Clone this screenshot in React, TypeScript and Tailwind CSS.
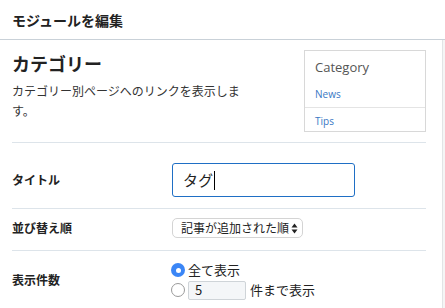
export default function App() {
  const jp = { fontFamily: '"Noto Sans CJK JP", "Noto Sans", sans-serif' };

  return (
    <div className="h-[308px] w-[445px] overflow-hidden bg-white text-[#222]" style={jp}>
      {/* header */}
      <div className="flex h-[40px] items-center border-b border-[#c9d1d8] px-3">
        <h2 className="text-[14px] font-bold leading-none text-[#222]">モジュールを編集</h2>
      </div>

      <div className="flex">
        <div className="w-[443px] border-r border-[#e2e4e6] pl-3 pr-4">
          {/* top section */}
          <div className="flex justify-between border-b border-[#dde4ea] py-[10px]">
            <div className="w-[240px]">
              <h1 className="pt-[1px] text-[18px] font-bold leading-[24px]">カテゴリー</h1>
              <p className="mt-[6px] text-[12px] leading-[20px] text-[#333]">
                カテゴリー別ページへのリンクを表示します。
              </p>
            </div>
            <div
              className="h-[82px] w-[122px] border border-[#d8d8d8] bg-white"
              style={{ fontFamily: '"Open Sans", "Noto Sans", sans-serif' }}
            >
              <p className="px-[10px] pt-[7px] text-[13px] leading-[18px] text-[#555]">Category</p>
              <ul className="mt-[5px] text-[10px] text-[#3a78c4]">
                <li className="flex h-[27px] items-center border-b border-[#e4e4e4] px-[10px]">News</li>
                <li className="px-[10px] pt-[5px] leading-[16px]">Tips</li>
              </ul>
            </div>
          </div>

          {/* title row */}
          <div className="flex items-center border-b border-[#dde4ea] pb-[11px] pt-[20px]">
            <label className="w-[160px] text-[12px] font-bold">タイトル</label>
            <div className="flex h-[34px] w-[183px] items-center rounded-[3px] border border-[#1f6fc5] px-[10px] text-[15px]">
              <span>タグ</span>
              <span className="ml-[1px] h-[19px] w-[1px] bg-black" />
            </div>
          </div>

          {/* sort row */}
          <div className="flex items-center border-b border-[#dde4ea] pb-[12px] pt-[9px]">
            <label className="w-[160px] text-[12px] font-bold">並び替え順</label>
            <div className="flex h-[20px] w-[131px] items-center justify-between rounded-[5px] border border-[#d4d4d4] pl-[8px] pr-[4px] text-[12px] leading-none">
              <span>記事が追加された順</span>
              <svg width="7" height="11" viewBox="0 0 7 11" className="shrink-0">
                <path d="M3.5 0.5 L6.5 4.5 L0.5 4.5 Z" fill="#222" />
                <path d="M3.5 10.5 L6.5 6.5 L0.5 6.5 Z" fill="#222" />
              </svg>
            </div>
          </div>

          {/* count row */}
          <div className="flex items-center pt-[9px]">
            <label className="w-[160px] text-[12px] font-bold">表示件数</label>
            <div className="-ml-[1px] flex flex-col text-[13px]">
              <div className="flex h-[20px] items-center">
                <span className="flex h-[14px] w-[14px] items-center justify-center rounded-full bg-[#3b86f6]">
                  <span className="h-[5px] w-[5px] rounded-full bg-white" />
                </span>
                <span className="ml-[3px]">全て表示</span>
              </div>
              <div className="flex h-[20px] items-center">
                <span className="h-[14px] w-[14px] rounded-full border border-[#9a9a9a] bg-white" />
                <span className="ml-[3px] flex h-[19px] w-[58px] items-center rounded-[2px] border border-[#cfd4d8] bg-[#f4f6f8] px-[6px]">
                  5
                </span>
                <span className="ml-[4px]">件まで表示</span>
              </div>
            </div>
          </div>
        </div>
        <div className="h-[268px] flex-1 bg-[#f5f5f5]" />
      </div>
    </div>
  );
}
